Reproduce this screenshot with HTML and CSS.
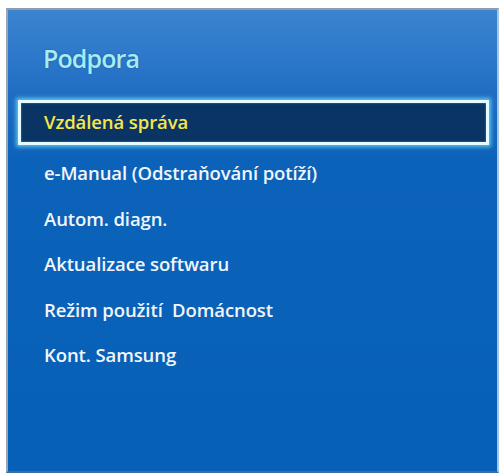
FILE: index.html
```html
<!DOCTYPE html>
<html>
<head>
<meta charset="utf-8">
<link rel="stylesheet" href="styles.css">
</head>
<body>
<div class="panel">
  <div class="title">Podpora</div>
  <ul class="menu">
    <li class="item selected">Vzdálená správa</li>
    <li class="item">e-Manual (Odstraňování potíží)</li>
    <li class="item">Autom. diagn.</li>
    <li class="item">Aktualizace softwaru</li>
    <li class="item">Režim použití&nbsp; Domácnost</li>
    <li class="item">Kont. Samsung</li>
  </ul>
</div>
</body>
</html>
```
FILE: styles.css
```css
html, body {
  margin: 0;
  padding: 0;
  background: #ffffff;
}
body {
  width: 504px;
  height: 475px;
  overflow: hidden;
  font-family: "Open Sans", "DejaVu Sans", sans-serif;
}
.panel {
  box-sizing: border-box;
  margin: 8px 5px 0 6px;
  height: 465px;
  border-top: 2px solid #8e9cac;
  border-left: 2px solid #9aa6b4;
  border-right: 2px solid #a8c4e0;
  border-bottom: 2px solid #3b6d9e;
  background: linear-gradient(to bottom, #3c84cf 0px, #2f7acb 40px, #1f6dc3 85px, #0c62b9 150px, #0660b7 100%);
  display: flex;
  flex-direction: column;
}
.title {
  color: #a6ecf2;
  font-size: 25px;
  font-weight: 600;
  letter-spacing: -0.9px;
  padding: 32px 0 0 35px;
  line-height: 32px;
  height: 58px;
  text-shadow: 0 0 2px rgba(0, 40, 90, 0.4);
}
.menu {
  list-style: none;
  margin: 0;
  padding: 0 8px 0 10px;
  display: flex;
  flex-direction: column;
}
.item {
  color: #f2f6fb;
  font-size: 18.5px;
  font-weight: 600;
  letter-spacing: -0.1px;
  height: 45.5px;
  line-height: 45px;
  padding-left: 26px;
  box-sizing: border-box;
}
.selected {
  color: #f4e84a;
  background: #0a3463;
  border: 3px solid #e4fbff;
  box-shadow: 0 0 4px 2px rgba(120, 230, 255, 0.75), inset 0 0 2px rgba(120, 220, 255, 0.6);
  line-height: 37px;
  height: 45px;
  margin-bottom: 5px;
  padding-left: 23px;
}
```
